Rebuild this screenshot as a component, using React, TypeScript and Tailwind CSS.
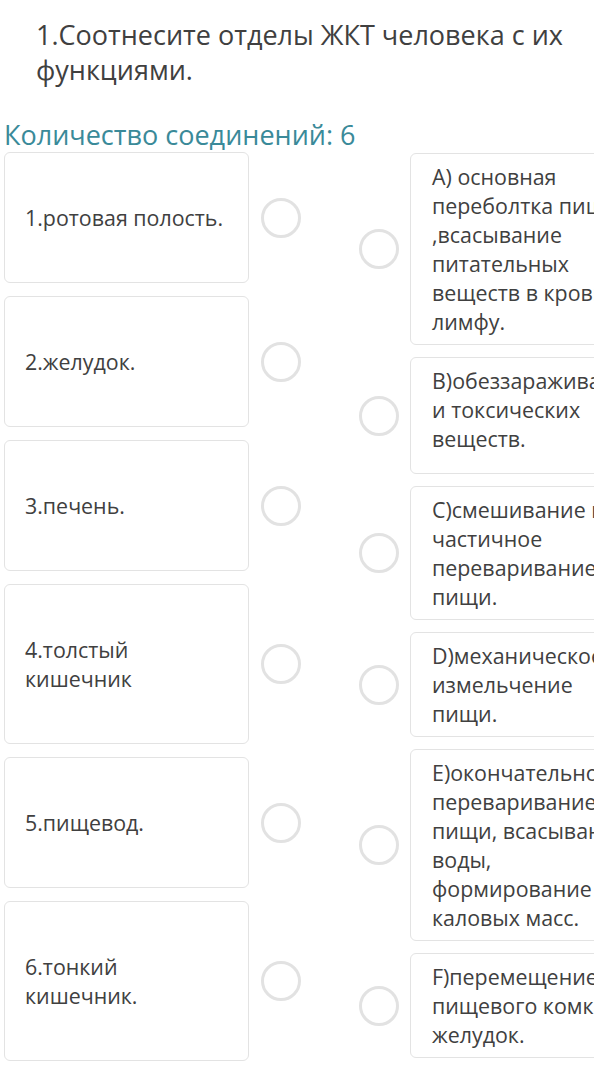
const LEFT = [
  "1.ротовая полость.",
  "2.желудок.",
  "3.печень.",
  "4.толстый кишечник",
  "5.пищевод.",
  "6.тонкий кишечник.",
];

const RIGHT = [
  { lead: "", text: "А) основная переболтка пищи ,всасывание питательных веществ в кровь и лимфу.", extra: false },
  { lead: "В)обеззараживание ядовитых", text: "и токсических веществ.", extra: true },
  { lead: "", text: "С)смешивание и частичное переваривание пищи.", extra: false },
  { lead: "", text: "D)механическое измельчение пищи.", extra: false },
  { lead: "", text: "Е)окончательное переваривание пищи, всасывание воды, формирование каловых масс.", extra: false },
  { lead: "", text: "F)перемещение пищевого комка в желудок.", extra: false },
];

function Dot() {
  return <div className="w-[40px] h-[40px] shrink-0 rounded-full border-[3px] border-[#e2e2e2] bg-white" />;
}

export default function App() {
  return (
    <div
      className="w-[594px] h-[1088px] overflow-hidden bg-white text-[#404040]"
      style={{ fontFamily: '"Open Sans", "Noto Sans", sans-serif' }}
    >
      {/* Question */}
      <h1 className="pl-[36px] pr-[20px] pt-[17px] text-[27px] leading-[35px] font-normal">
        1.Соотнесите отделы ЖКТ человека с их функциями.
      </h1>

      <div className="mt-[30px] pl-[4px] text-[27px] leading-[35px] text-[#3a8a99]">
        Количество соединений: 6
      </div>

      <div className="flex items-start">
        {/* Left column */}
        <div className="flex flex-col gap-[13px] pl-[4px] shrink-0">
          {LEFT.map((text) => (
            <div key={text} className="flex items-center gap-[12px]">
              <div className="w-[245px] shrink-0 rounded-[6px] border border-[#e3e3e3] pl-[20px] pr-[18px] py-[50px] text-[21.4px] leading-[29px]">
                {text}
              </div>
              <Dot />
            </div>
          ))}
        </div>

        {/* Right column */}
        <div className="flex flex-col gap-[12px] ml-[58px] pt-[1px] shrink-0">
          {RIGHT.map((item) => (
            <div key={item.text} className="flex items-center gap-[11px]">
              <Dot />
              <div
                className={
                  item.extra
                    ? "w-[245px] shrink-0 rounded-[6px] border border-[#e3e3e3] px-[21px] pt-[8px] pb-[20px] text-[21.4px] leading-[29px]"
                    : "w-[245px] shrink-0 rounded-[6px] border border-[#e3e3e3] px-[21px] py-[8px] text-[21.4px] leading-[29px]"
                }
              >
                {item.lead && <div className="whitespace-nowrap">{item.lead}</div>}
                {item.text}
              </div>
            </div>
          ))}
        </div>
      </div>
    </div>
  );
}
